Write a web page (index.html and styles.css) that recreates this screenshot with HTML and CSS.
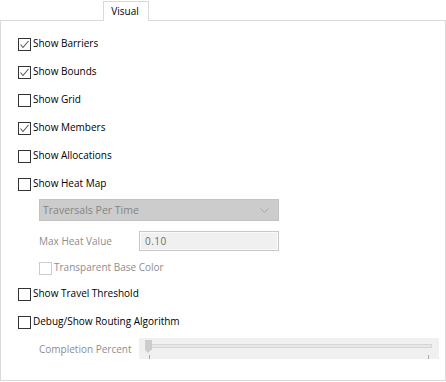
FILE: index.html
```html
<!DOCTYPE html>
<html>
<head>
<meta charset="utf-8">
<link rel="stylesheet" href="styles.css">
</head>
<body>
<div class="tabstrip"><div class="tab">Visual</div></div>
<div class="panel">
  <div class="row"><span class="cb"><svg viewBox="0 0 11 11" width="11" height="11"><polyline points="1.5,5.5 4,8.5 9.5,2" fill="none" stroke="#555" stroke-width="1.1"/></svg></span><span class="lbl">Show Barriers</span></div>
  <div class="row"><span class="cb"><svg viewBox="0 0 11 11" width="11" height="11"><polyline points="1.5,5.5 4,8.5 9.5,2" fill="none" stroke="#555" stroke-width="1.1"/></svg></span><span class="lbl">Show Bounds</span></div>
  <div class="row"><span class="cb"></span><span class="lbl">Show Grid</span></div>
  <div class="row"><span class="cb"><svg viewBox="0 0 11 11" width="11" height="11"><polyline points="1.5,5.5 4,8.5 9.5,2" fill="none" stroke="#555" stroke-width="1.1"/></svg></span><span class="lbl">Show Members</span></div>
  <div class="row"><span class="cb"></span><span class="lbl">Show Allocations</span></div>
  <div class="row"><span class="cb"></span><span class="lbl">Show Heat Map</span></div>
  <div class="sub">
    <div class="combo"><span>Traversals Per Time</span><svg class="chev" viewBox="0 0 9 5" width="9" height="5"><polyline points="0.5,0.5 4.5,4.5 8.5,0.5" fill="none" stroke="#a8a8a8" stroke-width="1"/></svg></div>
    <div class="field"><span class="flbl">Max Heat Value</span><div class="input">0.10</div></div>
    <div class="subrow"><span class="cb dis"></span><span class="lbl dtext">Transparent Base Color</span></div>
  </div>
  <div class="row r-travel"><span class="cb"></span><span class="lbl">Show Travel Threshold</span></div>
  <div class="row"><span class="cb"></span><span class="lbl">Debug/Show Routing Algorithm</span></div>
  <div class="sliderrow">
    <span class="flbl">Completion Percent</span>
    <div class="slider">
      <div class="track"></div>
      <div class="thumb"></div>
      <div class="tick t1"></div>
      <div class="tick t2"></div>
    </div>
  </div>
</div>
</body>
</html>
```
FILE: styles.css
```css
html, body {
  margin: 0;
  padding: 0;
  background: #fff;
}
body {
  width: 446px;
  height: 382px;
  font-family: "Open Sans", "Liberation Sans", sans-serif;
  font-size: 10px;
  line-height: 14px;
  color: #000;
  overflow: hidden;
}
.tabstrip {
  display: flex;
  padding-left: 103px;
  padding-top: 1px;
  height: 19px;
}
.tab {
  position: relative;
  z-index: 1;
  box-sizing: border-box;
  width: 46px;
  height: 20px;
  border: 1px solid #d9d9d9;
  border-bottom: none;
  background: #fff;
  text-align: center;
  padding-top: 2px;
  padding-right: 2px;
}
.panel {
  box-sizing: border-box;
  width: 446px;
  height: 361px;
  border: 1px solid #d9d9d9;
  padding: 9px 0 0 17px;
  display: flex;
  flex-direction: column;
}
.row {
  display: flex;
  align-items: center;
  height: 28px;
}
.cb {
  box-sizing: border-box;
  width: 13px;
  height: 13px;
  border: 1px solid #333;
  background: #fff;
  display: flex;
  align-items: center;
  justify-content: center;
  flex: none;
}
.cb svg { display: block; }
.cb.dis { border-color: #cccccc; }
.lbl {
  margin-left: 2px;
  position: relative;
  top: -1px;
}
.dtext { color: #8d8d8d; }
.sub {
  margin-left: 21px;
  display: flex;
  flex-direction: column;
}
.combo {
  box-sizing: border-box;
  margin-top: 1px;
  width: 240px;
  height: 22px;
  background: #cccccc;
  border: 1px solid #c2c2c2;
  display: flex;
  align-items: center;
  justify-content: space-between;
  padding: 0 9px 0 3px;
  color: #848484;
  font-size: 10.5px;
}
.chev { display: block; }
.field {
  display: flex;
  align-items: center;
  margin-top: 10px;
  height: 20px;
}
.flbl {
  width: 100px;
  color: #8d8d8d;
  flex: none;
}
.input {
  box-sizing: border-box;
  width: 140px;
  height: 20px;
  border: 1px solid #c8c8c8;
  box-shadow: inset 0 0 0 1px #fafafa;
  background: #f0f0f0;
  color: #6d6d6d;
  padding: 2px 0 0 5px;
  letter-spacing: 0.5px;
}
.subrow {
  display: flex;
  align-items: center;
  height: 20px;
  margin-top: 7px;
}
.r-travel { margin-top: 2px; }
.sliderrow {
  display: flex;
  align-items: center;
  margin-top: 2px;
  margin-left: 21px;
  height: 21px;
}
.slider {
  position: relative;
  width: 300px;
  height: 21px;
  background: #f0f0f0;
}
.track {
  position: absolute;
  left: 9px;
  right: 7px;
  top: 6px;
  height: 4px;
  box-sizing: border-box;
  border: 1px solid #d6d6d6;
  background: #e7e7e7;
}
.thumb {
  position: absolute;
  left: 6px;
  top: 2px;
  width: 7px;
  height: 10px;
  background: #cccccc;
}
.thumb::after {
  content: "";
  position: absolute;
  left: 0;
  top: 10px;
  border-left: 3.5px solid transparent;
  border-right: 3.5px solid transparent;
  border-top: 3px solid #cccccc;
}
.tick {
  position: absolute;
  top: 17px;
  width: 1px;
  height: 4px;
  background: #a8a8a8;
}
.t1 { left: 10px; }
.t2 { left: 289px; }
```
